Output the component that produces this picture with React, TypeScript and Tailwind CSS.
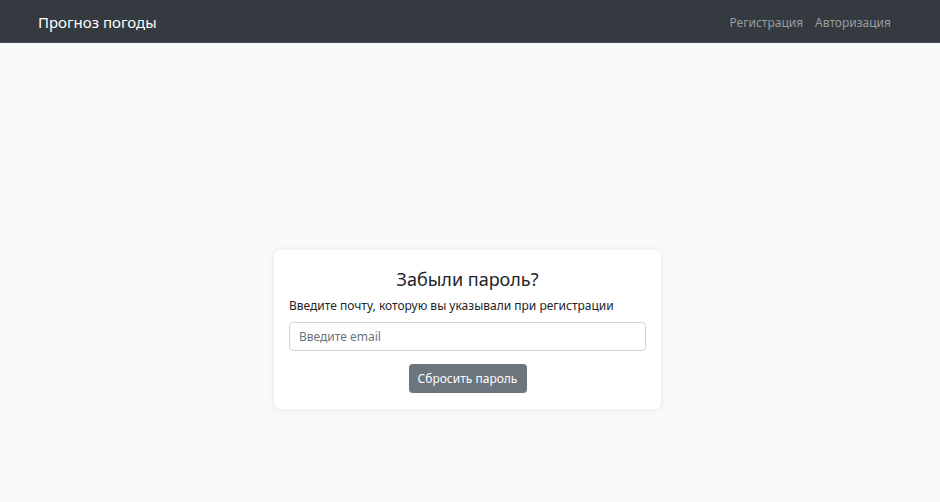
import React from "react";

export default function App() {
  return (
    <div className="min-h-[502px] bg-[#f8f9fa]" style={{ fontFamily: '"Noto Sans", "Open Sans", sans-serif' }}>
      <nav className="h-[43px] bg-[#343a40] flex items-center justify-between pl-[38px] pr-[49px] pt-[3px] border-b border-[#4a5057]">
        <span className="text-[15px] text-white leading-none">Прогноз погоды</span>
        <div className="flex gap-[12px] text-[12px] text-[#9a9da1]">
          <span>Регистрация</span>
          <span>Авторизация</span>
        </div>
      </nav>
      <main className="flex justify-center pt-[207px] pr-[5px]">
        <div className="w-[387px] bg-white rounded-[7px] shadow-[0_0_6px_rgba(0,0,0,0.08)] px-[15px] pt-[17px] pb-[16px] flex flex-col">
          <h3 className="text-center text-[18px] text-[#212529] leading-[24px]">Забыли пароль?</h3>
          <label className="mt-[6px] text-[12px] text-[#212529] leading-[18px]">Введите почту, которую вы указывали при регистрации</label>
          <input
            className="mt-[7px] h-[29px] border border-[#ced4da] rounded-[4px] px-[9px] text-[12px] placeholder:text-[#6c757d] outline-none"
            placeholder="Введите email"
          />
          <div className="flex justify-center mt-[13px]">
            <button className="h-[29px] w-[118px] bg-[#6c757d] text-white text-[12px] rounded-[4px]">Сбросить пароль</button>
          </div>
        </div>
      </main>
    </div>
  );
}
